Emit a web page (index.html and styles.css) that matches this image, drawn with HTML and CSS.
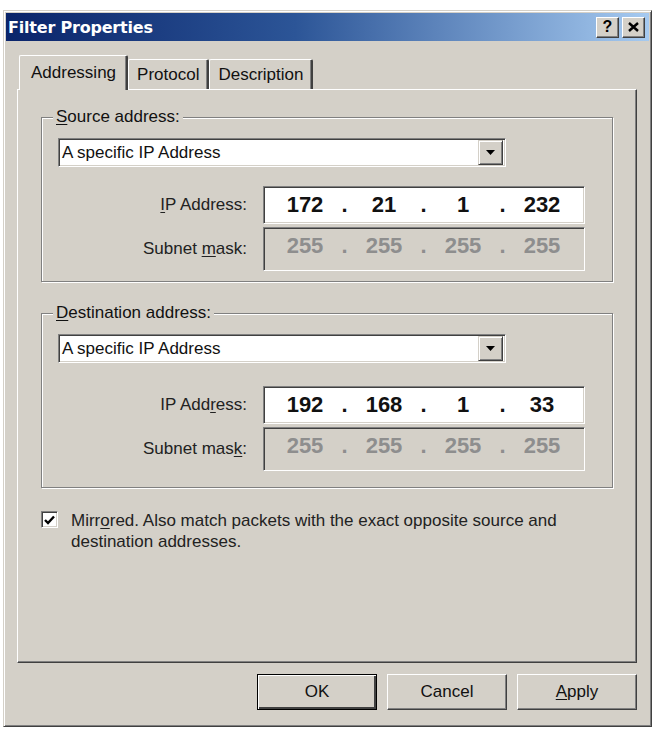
FILE: index.html
```html
<!DOCTYPE html>
<html lang="en">
<head>
    <meta charset="UTF-8">
    <meta name="viewport" content="width=device-width, initial-scale=1.0">
    <title>Filter Properties</title>
    <link rel="stylesheet" href="styles.css">
</head>
<body>
    <div class="window">
        <div class="titlebar">
            <span class="title">Filter Properties</span>
            <div class="caption-buttons">
                <span class="cap-btn help">?</span>
                <span class="cap-btn">
                    <svg width="11" height="10" viewBox="0 0 11 10">
                        <path d="M1 1 L10 9 M10 1 L1 9" stroke="#000" stroke-width="2.4" fill="none"/>
                    </svg>
                </span>
            </div>
        </div>

        <div class="content">
            <div class="tabs">
                <div class="tab active">Addressing</div>
                <div class="tab">Protocol</div>
                <div class="tab">Description</div>
            </div>

            <div class="panel">
                <div class="group">
                    <div class="group-title"><u>S</u>ource address:</div>
                    <div class="combo">
                        <span class="combo-text">A specific IP Address</span>
                        <span class="combo-btn">
                            <svg width="9" height="5" viewBox="0 0 9 5"><path d="M0 0 H9 L4.5 5 Z" fill="#000"/></svg>
                        </span>
                    </div>
                    <div class="field-row ip-row">
                        <label class="field-label"><u>I</u>P Address:</label>
                        <div class="ipbox">
                            <span class="octet">172</span><span class="dot">.</span>
                            <span class="octet">21</span><span class="dot">.</span>
                            <span class="octet">1</span><span class="dot">.</span>
                            <span class="octet">232</span>
                        </div>
                    </div>
                    <div class="field-row mask-row">
                        <label class="field-label">Subnet <u>m</u>ask:</label>
                        <div class="ipbox disabled">
                            <span class="octet">255</span><span class="dot">.</span>
                            <span class="octet">255</span><span class="dot">.</span>
                            <span class="octet">255</span><span class="dot">.</span>
                            <span class="octet">255</span>
                        </div>
                    </div>
                </div>

                <div class="group group-dest">
                    <div class="group-title"><u>D</u>estination address:</div>
                    <div class="combo">
                        <span class="combo-text">A specific IP Address</span>
                        <span class="combo-btn">
                            <svg width="9" height="5" viewBox="0 0 9 5"><path d="M0 0 H9 L4.5 5 Z" fill="#000"/></svg>
                        </span>
                    </div>
                    <div class="field-row ip-row">
                        <label class="field-label">IP Add<u>r</u>ess:</label>
                        <div class="ipbox">
                            <span class="octet">192</span><span class="dot">.</span>
                            <span class="octet">168</span><span class="dot">.</span>
                            <span class="octet">1</span><span class="dot">.</span>
                            <span class="octet">33</span>
                        </div>
                    </div>
                    <div class="field-row mask-row">
                        <label class="field-label">Subnet mas<u>k</u>:</label>
                        <div class="ipbox disabled">
                            <span class="octet">255</span><span class="dot">.</span>
                            <span class="octet">255</span><span class="dot">.</span>
                            <span class="octet">255</span><span class="dot">.</span>
                            <span class="octet">255</span>
                        </div>
                    </div>
                </div>

                <div class="check-row">
                    <span class="checkbox">
                        <svg width="11" height="10" viewBox="0 0 11 10"><path d="M1 5 L4 8 L10 1.5" stroke="#000" stroke-width="2.4" fill="none"/></svg>
                    </span>
                    <span class="check-text">Mirr<u>o</u>red. Also match packets with the exact opposite source and destination addresses.</span>
                </div>
            </div>

            <div class="buttons">
                <button class="button default">OK</button>
                <button class="button">Cancel</button>
                <button class="button"><u>A</u>pply</button>
            </div>
        </div>
    </div>
</body>
</html>
```

FILE: styles.css
```css
body {
    margin: 0;
    padding: 0;
    background-color: #fff;
    font-family: "Liberation Sans", Arial, sans-serif;
    font-size: 17px;
    color: #111;
}
u {
    text-decoration-thickness: 1px;
    text-underline-offset: 2px;
}

/* dialog frame */
.window {
    box-sizing: border-box;
    width: 649px;
    margin: 10px 0 0 3px;
    padding: 2px;
    background-color: #d4d0c8;
    border: 1px solid;
    border-color: #d4d0c8 #404040 #404040 #d4d0c8;
    box-shadow: inset 1px 1px 0 #fff, inset -1px -1px 0 #808080;
}
.titlebar {
    height: 28px;
    display: flex;
    align-items: center;
    justify-content: space-between;
    padding: 0 4px 0 2px;
    background: linear-gradient(to right, #0a246a 0%, #2c5597 45%, #a6caf0 100%);
}
.title {
    font-family: "DejaVu Sans", Verdana, sans-serif;
    font-weight: bold;
    font-size: 16px;
    color: #fff;
    letter-spacing: -0.2px;
}
.caption-buttons {
    display: flex;
    gap: 3px;
}
.cap-btn {
    box-sizing: border-box;
    width: 23px;
    height: 21px;
    display: flex;
    align-items: center;
    justify-content: center;
    background-color: #d4d0c8;
    border: 1px solid;
    border-color: #fff #404040 #404040 #fff;
    box-shadow: inset -1px -1px 0 #808080;
}
.cap-btn.help {
    font-weight: bold;
    font-size: 16px;
    color: #000;
}

.content {
    padding: 14px 12px 14px 11px;
}

/* tab strip */
.tabs {
    height: 34px;
    display: flex;
    align-items: flex-end;
    padding-left: 2px;
}
.tab {
    box-sizing: border-box;
    height: 30px;
    padding: 5px 8px 0 8px;
    border-top: 1px solid #fff;
    border-left: 1px solid #fff;
    border-right: 2px solid #404040;
    border-radius: 2px 2px 0 0;
    box-shadow: inset -1px 0 0 #808080;
}
.tab.active {
    position: relative;
    z-index: 1;
    height: 35px;
    margin-bottom: -1px;
    padding: 7px 10px 0 11px;
    background-color: #d4d0c8;
}

.panel {
    box-sizing: border-box;
    height: 574px;
    padding: 27px 23px 0 23px;
    border: 1px solid;
    border-color: #fff #404040 #404040 #fff;
    box-shadow: inset -1px -1px 0 #808080;
}

/* group boxes */
.group {
    padding: 0 16px 10px 16px;
    border: 1px solid #808080;
    box-shadow: inset 1px 1px 0 #fff, 1px 1px 0 #fff;
}
.group-dest {
    margin-top: 31px;
    padding-bottom: 16px;
}
.group-title {
    display: block;
    width: fit-content;
    margin: -11px 0 0 -5px;
    padding: 0 3px;
    line-height: 20px;
    background-color: #d4d0c8;
}
.combo {
    box-sizing: border-box;
    width: 448px;
    height: 29px;
    margin-top: 11px;
    display: flex;
    align-items: center;
    justify-content: space-between;
    padding: 0 2px 0 3px;
    background-color: #fff;
    border: 1px solid;
    border-color: #808080 #fff #fff #808080;
    box-shadow: inset 1px 1px 0 #404040, inset -1px -1px 0 #d4d0c8;
}
.combo-btn {
    box-sizing: border-box;
    width: 25px;
    height: 25px;
    display: flex;
    align-items: center;
    justify-content: center;
    background-color: #d4d0c8;
    border: 1px solid;
    border-color: #d4d0c8 #404040 #404040 #d4d0c8;
    box-shadow: inset 1px 1px 0 #fff, inset -1px -1px 0 #808080;
}

.field-row {
    display: flex;
    align-items: center;
    gap: 16px;
}
.ip-row {
    margin-top: 19px;
}
.group-dest .ip-row {
    margin-top: 23px;
}
.mask-row {
    margin-top: 3px;
}
.field-label {
    width: 189px;
    text-align: right;
    color: #222;
}
.ipbox {
    box-sizing: border-box;
    width: 322px;
    height: 38px;
    display: flex;
    align-items: center;
    padding-left: 9px;
    background-color: #fff;
    font-size: 22px;
    font-weight: bold;
    color: #111;
    border: 1px solid;
    border-color: #808080 #fff #fff #808080;
    box-shadow: inset 1px 1px 0 #404040, inset -1px -1px 0 #d4d0c8;
}
.ipbox.disabled {
    height: 44px;
    background-color: #d4d0c8;
    color: #8e8e8e;
    padding-bottom: 6px;
}
.octet {
    width: 64px;
    text-align: center;
}
.dot {
    width: 15px;
    text-align: center;
}

/* mirrored option */
.check-row {
    display: flex;
    align-items: flex-start;
    gap: 13px;
    margin-top: 22px;
    line-height: 21px;
}
.checkbox {
    box-sizing: border-box;
    flex: none;
    width: 17px;
    height: 17px;
    margin-top: 1px;
    display: flex;
    align-items: center;
    justify-content: center;
    background-color: #fff;
    border: 1px solid;
    border-color: #808080 #fff #fff #808080;
    box-shadow: inset 1px 1px 0 #404040, inset -1px -1px 0 #d4d0c8;
}
.check-text {
    max-width: 500px;
    color: #222;
}

/* dialog buttons */
.buttons {
    display: flex;
    justify-content: flex-end;
    gap: 10px;
    margin-top: 11px;
}
.button {
    box-sizing: border-box;
    width: 120px;
    height: 36px;
    padding: 0;
    font-family: "Liberation Sans", Arial, sans-serif;
    font-size: 17px;
    color: #111;
    background-color: #d4d0c8;
    border: 1px solid;
    border-color: #fff #404040 #404040 #fff;
    box-shadow: inset -1px -1px 0 #808080;
}
.button.default {
    border: 1px solid #000;
    box-shadow: inset 1px 1px 0 #fff, inset -2px -2px 0 #404040;
}
```
